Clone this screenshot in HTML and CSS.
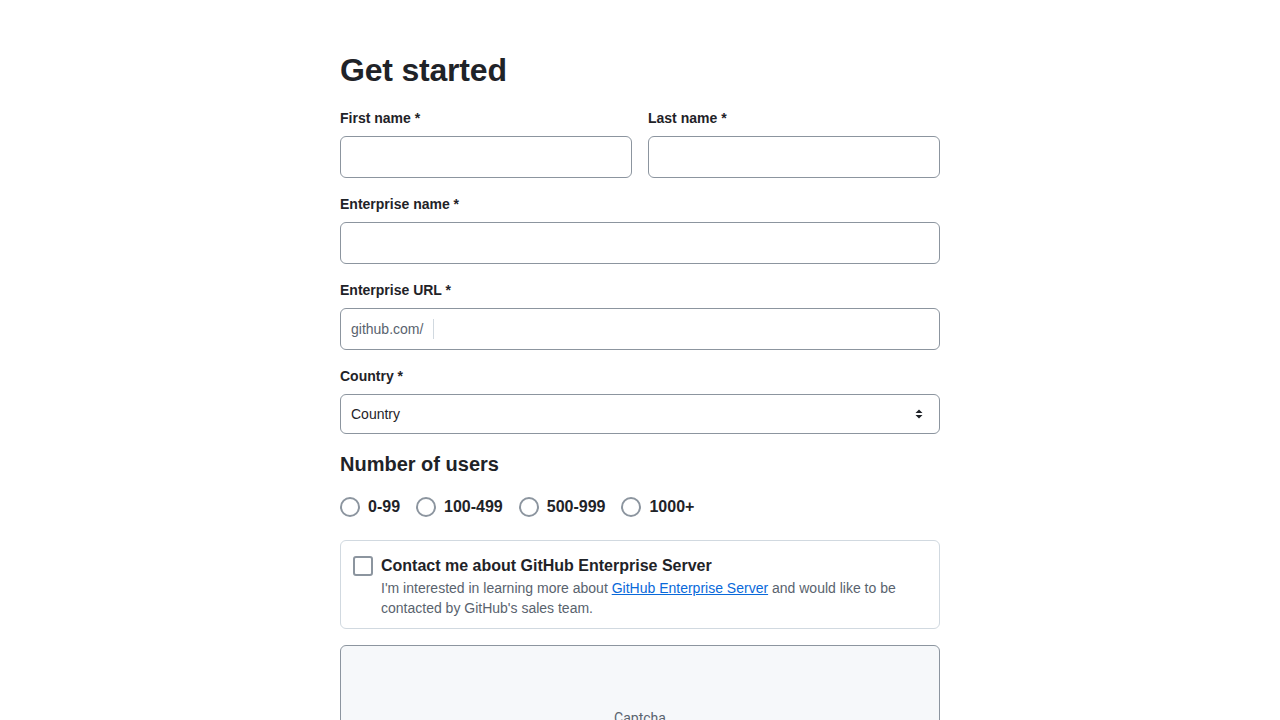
FILE: index.html
```html
<!DOCTYPE html>
<html lang="en">
<head>
<meta charset="utf-8">
<title>Get started</title>
<link rel="stylesheet" href="styles.css">
</head>
<body>
<main class="page">
  <h1 class="title">Get started</h1>
  <div class="row">
    <div class="field">
      <label class="label">First name *</label>
      <input class="input" type="text">
    </div>
    <div class="field">
      <label class="label">Last name *</label>
      <input class="input" type="text">
    </div>
  </div>
  <div class="field">
    <label class="label">Enterprise name *</label>
    <input class="input" type="text">
  </div>
  <div class="field">
    <label class="label">Enterprise URL *</label>
    <div class="input url">
      <span class="prefix">github.com/</span>
      <span class="divider"></span>
      <input class="bare" type="text">
    </div>
  </div>
  <div class="field field-select">
    <label class="label">Country *</label>
    <div class="input select">
      <span>Country</span>
      <svg class="caret" width="8" height="10" viewBox="0 0 8 10"><path d="M0.5 4 L4 0.5 L7.5 4 Z M0.5 6 L4 9.5 L7.5 6 Z" fill="#1f2328"/></svg>
    </div>
  </div>
  <h2 class="subtitle">Number of users</h2>
  <div class="radios">
    <label class="radio"><span class="circle"></span>0-99</label>
    <label class="radio"><span class="circle"></span>100-499</label>
    <label class="radio"><span class="circle"></span>500-999</label>
    <label class="radio"><span class="circle"></span>1000+</label>
  </div>
  <div class="contact">
    <span class="checkbox"></span>
    <div class="contact-text">
      <div class="contact-title">Contact me about GitHub Enterprise Server</div>
      <div class="contact-desc">I'm interested in learning more about <a href="#">GitHub Enterprise Server</a> and would like to be contacted by GitHub's sales team.</div>
    </div>
  </div>
  <div class="captcha">Captcha</div>
</main>
</body>
</html>
```
FILE: styles.css
```css
* { box-sizing: border-box; }
html, body { margin: 0; padding: 0; background: #fff; }
body {
  font-family: "Liberation Sans", Arial, sans-serif;
  color: #1f2328;
}
.page {
  width: 600px;
  margin: 0 auto;
  padding-top: 50px;
}
.title {
  font-size: 32px;
  line-height: 40px;
  font-weight: 700;
  letter-spacing: -0.2px;
  margin: 0 0 18px;
}
.row {
  display: flex;
  gap: 16px;
}
.row .field { flex: 1; }
.field {
  display: flex;
  flex-direction: column;
  margin-bottom: 16px;
}
.field-select { margin-bottom: 14px; }
.label {
  font-size: 14px;
  line-height: 20px;
  font-weight: 700;
  margin-bottom: 8px;
}
.input {
  height: 42px;
  border: 1px solid #8c959f;
  border-radius: 6px;
  background: #fff;
  font: inherit;
  font-size: 14px;
  padding: 0 10px;
  width: 100%;
}
.url {
  display: flex;
  align-items: center;
}
.prefix { color: #59636e; font-size: 14px; }
.divider {
  width: 1px;
  height: 20px;
  background: #d1d9e0;
  margin-left: 10px;
}
.bare {
  border: 0;
  outline: 0;
  flex: 1;
  height: 100%;
  background: transparent;
}
.select {
  height: 40px;
  display: flex;
  align-items: center;
  justify-content: space-between;
  font-size: 14px;
  padding: 0 16px 0 10px;
}
.caret { display: block; }
.subtitle {
  font-size: 20px;
  line-height: 30px;
  font-weight: 700;
  margin: 0 0 18px;
  padding-top: 1px;
}
.radios {
  display: flex;
  gap: 16px;
  margin-bottom: 23px;
}
.radio {
  display: flex;
  align-items: center;
  gap: 8px;
  font-size: 16px;
  font-weight: 700;
  line-height: 20px;
}
.circle {
  width: 20px;
  height: 20px;
  border: 2px solid #8c959f;
  border-radius: 50%;
}
.contact {
  display: flex;
  gap: 8px;
  border: 1px solid #d1d9e0;
  border-radius: 6px;
  padding: 14px 12px 10px;
  margin-bottom: 16px;
}
.checkbox {
  flex: none;
  width: 20px;
  height: 20px;
  border: 2px solid #8c959f;
  border-radius: 3px;
  margin-top: 1px;
}
.contact-title {
  font-size: 16px;
  font-weight: 700;
  line-height: 22px;
}
.contact-desc {
  font-size: 14px;
  line-height: 20px;
  color: #59636e;
  margin-top: 1px;
}
.contact-desc a { color: #0969da; }
.captcha {
  height: 150px;
  border: 1px solid #8c959f;
  border-radius: 6px;
  background: #f6f8fa;
  font-family: Roboto, "Liberation Sans", sans-serif;
  font-size: 14px;
  color: #59636e;
  display: flex;
  justify-content: center;
  padding-top: 64px;
}
```
